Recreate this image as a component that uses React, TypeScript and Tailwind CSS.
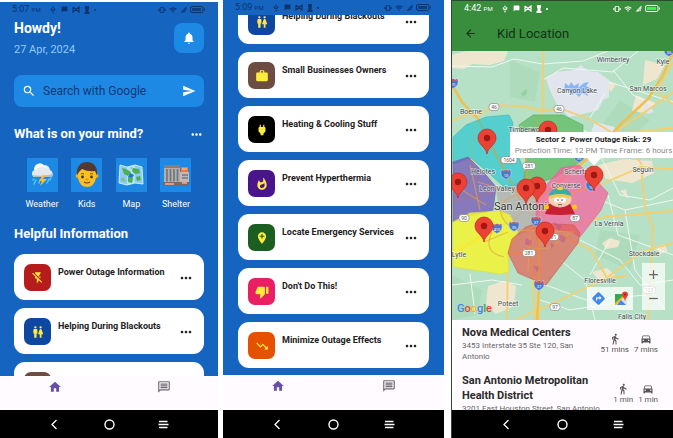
import type { ReactNode } from "react";
import {
  MdAdd,
  MdAddLocation,
  MdArrowBack,
  MdChatBubble,
  MdDirections,
  MdDirectionsCar,
  MdDirectionsWalk,
  MdFlashOff,
  MdHome,
  MdMoreHoriz,
  MdNotifications,
  MdOutlineMessage,
  MdPower,
  MdRemove,
  MdSearch,
  MdSend,
  MdThumbDown,
  MdTrendingDown,
  MdUsb,
  MdVibration,
  MdWc,
  MdWhatshot,
  MdWifi,
  MdSignalCellularNodata,
  MdWork,
} from "react-icons/md";

/* ---------- shared chrome ---------- */

function StatusBar({ time, battery, className }: { time: string; battery: string; className: string }) {
  return (
    <div className={`flex h-[15px] shrink-0 items-center justify-between pl-3 pr-[13px] ${className}`}>
      <div className="flex items-center gap-1">
        <span className="text-[9px] leading-3">
          {time} <span className="text-[6px]">PM</span>
        </span>
        <MdUsb className="ml-1 size-2" />
        <MdChatBubble className="size-[7px]" />
        <svg viewBox="0 0 8 7" className="h-[7px] w-2" fill="none" stroke="currentColor" strokeWidth="1.2">
          <path d="M1 1v5l6-5v5L1 1M7 1v5" />
        </svg>
        <svg viewBox="0 0 6 8" className="h-2 w-[6px]" fill="currentColor">
          <path d="M1 0h4v3H4.500v3h1v2h-5V6h1V3H1z" />
        </svg>
        <span className="size-[2px] rounded-full bg-current" />
      </div>
      <div className="flex items-center gap-[3px]">
        <MdVibration className="size-2" />
        <MdWifi className="size-2" />
        <MdSignalCellularNodata className="size-[7px]" />
        <svg viewBox="0 0 15 7" className="h-[7px] w-[15px]" fill="none" stroke="currentColor">
          <rect x=".5" y=".5" width="12.500" height="6" rx="1.500" />
          <rect x="2" y="2" width="9" height="3" fill={battery} stroke="none" />
          <path d="M14.500 2.500v2" />
        </svg>
      </div>
    </div>
  );
}

function SystemNav() {
  return (
    <div className="flex h-7 shrink-0 items-center justify-between bg-black px-[49px] text-white">
      <button aria-label="Back">
        <svg viewBox="0 0 11 11" className="size-[11px]" fill="none" stroke="currentColor" strokeWidth="1.300">
          <path d="M7.500 1 3 5.500 7.500 10" />
        </svg>
      </button>
      <button aria-label="Home screen">
        <svg viewBox="0 0 11 11" className="size-[11px]" fill="none" stroke="currentColor" strokeWidth="1.400">
          <circle cx="5.500" cy="5.500" r="4.500" />
        </svg>
      </button>
      <button aria-label="Recent apps">
        <svg viewBox="0 0 11 11" className="size-[11px]" fill="none" stroke="currentColor" strokeWidth="1.500">
          <path d="M1 2.500h8.500M.5 5.500h10M1 8.500h8.500" />
        </svg>
      </button>
    </div>
  );
}

function TabBar({ className }: { className: string }) {
  return (
    <nav className={`grid shrink-0 grid-cols-2 bg-[#fffbff] ${className}`}>
      <button aria-label="Home" className="flex justify-center pt-1 text-[#6750a4]">
        <MdHome className="size-[14px]" />
      </button>
      <button aria-label="Messages" className="flex justify-center pt-1 text-[#6f6a74]">
        <MdOutlineMessage className="size-[14px]" />
      </button>
    </nav>
  );
}

function TopicCard({ title, color, icon }: { title: string; color: string; icon: ReactNode }) {
  return (
    <article className="flex h-[46px] shrink-0 items-start rounded-[11px] bg-white px-[10px] pt-[10px] text-[#212121]">
      <span className={`flex size-[27px] shrink-0 items-center justify-center rounded-[7px] text-[#ffeb3b] ${color}`}>
        {icon}
      </span>
      <h3 className="ml-[7px] flex-1 whitespace-nowrap text-[9px] font-bold leading-4">{title}</h3>
      <button aria-label={`More about ${title}`} className="mt-[6px]">
        <MdMoreHoriz className="size-4" />
      </button>
    </article>
  );
}

const cards = {
  power: <TopicCard title="Power Outage Information" color="bg-[#b71c1c]" icon={<MdFlashOff className="size-[14px]" />} />,
  blackout: <TopicCard title="Helping During Blackouts" color="bg-[#0d47a1]" icon={<MdWc className="size-[14px]" />} />,
  business: <TopicCard title="Small Businesses Owners" color="bg-[#6d4c41]" icon={<MdWork className="size-[14px]" />} />,
  heating: <TopicCard title="Heating &amp; Cooling Stuff" color="bg-black" icon={<MdPower className="size-[14px]" />} />,
  heat: <TopicCard title="Prevent Hyperthermia" color="bg-[#4a148c]" icon={<MdWhatshot className="size-[14px]" />} />,
  locate: <TopicCard title="Locate Emergency Services" color="bg-[#1b5e20]" icon={<MdAddLocation className="size-[14px]" />} />,
  dont: <TopicCard title="Don't Do This!" color="bg-[#e91e63]" icon={<MdThumbDown className="size-[14px]" />} />,
  minimize: <TopicCard title="Minimize Outage Effects" color="bg-[#e65100]" icon={<MdTrendingDown className="size-[14px]" />} />,
};

/* ---------- shortcut pictures ---------- */

const WeatherArt = (
  <svg viewBox="0 0 26 26" className="size-[26px]">
    <path d="M7 18l-2 4M11 18l-1 3M20 17l-2 4M22 16l-1 2M5 17l-1 1" stroke="#4fc3f7" strokeWidth="1.600" strokeLinecap="round" />
    <path d="M5 15a4 4 0 0 1 0-7 6 6 0 0 1 10-5 6 6 0 0 1 6 5 4 4 0 0 1 1 7z" fill="#e4e9ec" />
    <path d="M6 8a5 5 0 0 1 9-4 5 5 0 0 1 4 3 9 9 0 0 0-13 1z" fill="#fff" />
    <path d="M3 13q10 2 21-1 0 3-2 3H5z" fill="#b5bec4" />
    <path d="M14 13l-4 6h3l-2 5 7-7h-4l3-4z" fill="#fbc02d" />
  </svg>
);

const KidArt = (
  <svg viewBox="0 0 26 26" className="size-[26px]">
    <circle cx="3.500" cy="14" r="2" fill="#f5a623" />
    <circle cx="22.500" cy="14" r="2" fill="#f5a623" />
    <path d="M4 11a9 9 0 0 1 18 0v5q-2 9-9 9t-9-9z" fill="#fcc021" />
    <path d="M3 13C2 4 7 0 13 0s11 4 10 13l-2-4Q14 10 8 7l-3 3z" fill="#543930" />
    <path d="M7 12q2-1 3 0M16 12q2-1 3 0" stroke="#6d4c41" strokeWidth="1" fill="none" />
    <circle cx="8.500" cy="15" r="1.400" fill="#403530" />
    <circle cx="17.500" cy="15" r="1.400" fill="#403530" />
    <path d="M11.500 17.500h3" stroke="#e18b1c" strokeWidth="1.500" />
    <path d="M10 20q3 2 6 0" stroke="#6d3b24" strokeWidth="1.200" fill="none" />
  </svg>
);

const MapArt = (
  <svg viewBox="0 0 26 26" className="size-[26px]">
    <path d="M2 3l7 2 8-2 7 2 1 17-8-1-8 2-8-2z" fill="#b3e0f5" />
    <path d="M2 3l7 2v18l-8-2zM17 3l7 2 1 17-8-1z" fill="#90caf9" />
    <path d="M4 6l4 1 5 3-3 4-4-2zM15 6l6 1 1 4-5 1-3-3zM10 15l5 1-1 5-4-1zM18 15l4-1 1 4-4 1z" fill="#4caf50" />
    <path d="M3 16l3-1 2 5-5-1zM12 6l2-1 1 3z" fill="#81c784" />
    <path d="M12 11l4 2-2 3-4-1z" fill="#1976d2" />
    <path d="M2 3l7 2 8-2 7 2 1 17-8-1-8 2-8-2z" fill="none" stroke="#e1f5fe" strokeWidth=".800" />
  </svg>
);

const ShelterArt = (
  <svg viewBox="0 0 28 26" className="h-[26px] w-7">
    <path d="M2 3h16v20H2z" fill="#bcaaa4" />
    <path d="M2 3h16v3H2z" fill="#8d7b74" />
    <path d="M5 7v13M8.500 7v13M12 7v13M15.500 7v13" stroke="#5f7a87" strokeWidth="1.600" />
    <path d="M2 20h16" stroke="#d7ccc8" strokeWidth=".700" />
    <path d="M18 10h9v13h-9z" fill="#c9b7ae" />
    <path d="M19 5h7v5h-7z" fill="#ff7043" />
    <path d="M20 7h5" stroke="#ffe082" />
    <path d="M20 13h6M20 16h6" stroke="#607d8b" strokeWidth="1.500" />
    <path d="M1 20h26v4H1z" fill="#7b6a63" />
    <path d="M3 22h9M20 21h5" stroke="#ffab91" strokeWidth="1.500" />
  </svg>
);

const shortcuts = [
  { label: "Weather", art: WeatherArt },
  { label: "Kids", art: KidArt },
  { label: "Map", art: MapArt },
  { label: "Shelter", art: ShelterArt },
];

function HomeScreen() {
  return (
    <section className="flex min-h-0 min-w-0 flex-col border-t-2 border-white bg-[#1565c0]">
      <StatusBar time="5:07" battery="#0c3f80" className="text-[#0a3470]" />
      <main className="flex min-h-0 flex-1 flex-col overflow-hidden px-[14px] text-white">
        <header className="flex shrink-0 items-start justify-between">
          <div>
            <h1 className="mt-[2px] text-[14px] font-bold leading-[18px]">Howdy!</h1>
            <p className="mt-[5px] text-[11px] leading-4 text-[#90caf9]">27 Apr, 2024</p>
          </div>
          <button aria-label="Notifications" className="mt-[6px] flex size-[30px] items-center justify-center rounded-lg bg-[#1e88e5]">
            <MdNotifications className="size-[14px]" />
          </button>
        </header>
        <form className="mt-[17px] flex h-8 shrink-0 items-center rounded-lg bg-[#1e88e5] px-2">
          <label htmlFor="search" className="sr-only">Search</label>
          <MdSearch className="size-[14px] shrink-0" />
          <input
            id="search"
            type="text"
            placeholder="Search with Google"
            className="ml-[7px] h-8 min-w-0 flex-1 bg-transparent text-[12px] leading-5 outline-none placeholder:text-[#0d3a78]"
          />
          <button type="button" aria-label="Send" className="shrink-0">
            <MdSend className="size-[14px]" />
          </button>
        </form>
        <div className="mt-[19px] flex shrink-0 items-center justify-between">
          <h2 className="text-[13px] font-bold leading-4">What is on your mind?</h2>
          <button aria-label="More">
            <MdMoreHoriz className="size-[15px]" />
          </button>
        </div>
        <div className="mt-4 flex shrink-0 justify-between px-3">
          {shortcuts.map((s) => (
            <button key={s.label} className="flex w-8 flex-col items-center">
              <span className="flex h-[34px] w-[31px] items-center justify-center bg-[#1e88e5]">{s.art}</span>
              <span className="mt-1 text-[9px] leading-4">{s.label}</span>
            </button>
          ))}
        </div>
        <h2 className="mt-[14px] shrink-0 text-[13px] font-bold leading-4">Helpful Information</h2>
        <div className="mt-3 flex flex-col gap-2">
          {cards.power}
          {cards.blackout}
          {cards.business}
        </div>
      </main>
      <TabBar className="h-[34px]" />
      <SystemNav />
    </section>
  );
}

function TopicsScreen() {
  return (
    <section className="flex min-h-0 min-w-0 flex-col bg-[#1565c0]">
      <StatusBar time="5:09" battery="#0c3f80" className="text-[#0a3470]" />
      <main className="flex min-h-0 flex-1 flex-col justify-end gap-2 overflow-hidden px-[15px] pb-[7px]">
        {cards.blackout}
        {cards.business}
        {cards.heating}
        {cards.heat}
        {cards.locate}
        {cards.dont}
        {cards.minimize}
      </main>
      <TabBar className="h-[35px]" />
      <SystemNav />
    </section>
  );
}

/* ---------- map ---------- */

const towns: [string, number, number][] = [
  ["Wimberley", 613, 62],
  ["Kyle", 663, 64],
  ["Canyon Lake", 577, 93],
  ["San Marcos", 648, 91],
  ["Boerne", 471, 114],
  ["Timberwood", 528, 132],
  ["Helotes", 483, 174],
  ["Leon Valley", 497, 191],
  ["Converse", 566, 188],
  ["Schertz", 576, 174],
  ["Seguin", 643, 172],
  ["La Vernia", 609, 226],
  ["Stockdale", 644, 256],
  ["Floresville", 600, 283],
  ["Poteet", 508, 306],
  ["Lytle", 459, 257],
  ["Falls City", 632, 319],
];

const pins: [number, number][] = [
  [487, 154],
  [548, 146],
  [458, 198],
  [537, 202],
  [526, 204],
  [594, 191],
  [484, 242],
  [545, 247],
];

const badges: [string, number, number][] = [
  ["46", 494, 107],
  ["46", 559, 109],
  ["1604", 509, 160],
  ["281", 529, 166],
  ["90", 464, 218],
  ["87", 575, 218],
  ["181", 552, 237],
  ["281", 529, 253],
  ["97", 555, 307],
  ["123", 649, 290],
];

const shields: [string, number, number][] = [
  ["10", 453, 83],
  ["35", 669, 51],
  ["10", 506, 174],
  ["35", 579, 157],
  ["10", 591, 186],
  ["410", 497, 228],
  ["35", 514, 226],
  ["37", 536, 221],
  ["37", 539, 285],
];

function RegionMap() {
  return (
    <svg
      viewBox="452 51 221 269"
      preserveAspectRatio="xMidYMid slice"
      className="absolute inset-0 size-full"
      fontFamily="Roboto, sans-serif"
      role="img"
      aria-label="Map of the San Antonio area"
    >
      <path d="M452 51h221v269H452z" fill="#b7e1c6" />
      <g fill="#addbbb">
        <path d="M510 60l30 12-5 30-25-5zM620 100l30 20-25 25-30-10zM600 230l40 5-10 35-35-15zM452 275l30 15-5 25-25 5z" />
      </g>
      <path d="M521 93l6-4v5l-5 3z" fill="#96cfa5" />
      <g fill="#efe6cf">
        <path d="M452 55l14-4h42l-4 10-14 4-18-1-8 5-12-1z" />
        <path d="M602 78l14 6-5 8zM645 60l20 5-8 14-14 6zM636 95l20 8-10 10-14-2zM598 165l26-6 28 2 2 12-22 10-26-4z" />
        <path d="M488 286l16-5 12 5-2 20-18 8-10-10zM602 243l8-5 10 3-2 6-12 2zM592 272l15-4 8 7-14 8zM656 247l8-3 4 7-8 3zM620 191l6-2 2 10z" />
      </g>
      <path d="M549 88l-3-10 10-6 18-2 7-5 7 6 10 1 11 8v17l-6 3-5 10-19 5-10 2-13-14z" fill="#e3e5ee" />
      <path d="M640 100l8 4 6 8-6 2zM595 122l20 5-4 8-20-3z" fill="#e3e5ee" />
      <path d="M565 83l4 3 2-4 3 4 5-3-1 5 6-5 5-1-3 4 6 3-6 1 2 6-6-3-3 4-4-4-3 2-2-5-6 1z" fill="#8ab4f8" />

      <g fill="none" stroke="#eef7ef" strokeWidth="1">
        <path d="M452 66l40 1 22-8 29 5 40-3 25-10M543 80l20-12 50 4 25-21M609 82l64 20M613 70l20 25 20 10M590 118l15-25M583 130l30 14 30-9 30 12M600 200l25 10 48-10M608 195l10 40 55 20M580 240l40 20 20 25 33-5M546 285l40 15 60-5M560 260l25 20 10 40M452 285l40-5 30 5M470 274l5 40M540 300l30 10 50-8M625 210l10 60 30 40M600 155l20 40 30 5 23-12M610 240l-20 35" />
      </g>
      <g fill="none" stroke="#f5cf6e" strokeWidth="1.800">
        <path d="M543 51v50q1 9-3 16l-12 26-2 30 3 30 6 117" />
        <path d="M452 121q14-8 28-6l14-10 26 1 25 5 14-3 30 11 24 14 20-1 40-4" />
        <path d="M673 92l-28 20-33 22M673 62l-10 18-4 14 14 10M612 134l20 15 10 16" />
        <path d="M526 204l35-10 34-7 46-20 32 2M641 167l4 40 8 20-5 93" />
        <path d="M526 230l35 5 30 15 16 28 20-2M673 243l-30 8-38 28-60 28-30 13" />
        <path d="M505 188l-25 8-28 5M500 230l-22 10-26 10M508 250l-1 70M575 225l30-8 68-6M478 118l-8 30 8 34" />
        <path d="M539 230v90M538 253h-30" />
      </g>
      <g fill="none" stroke="#f2be4d" strokeWidth="2.500">
        <path d="M452 85l10 17 17 18 10 22 17 30 14 28" />
        <path d="M673 53l-11 24-14 22-24 22-12 13-16 18-30 24-30 25-26 21-30 14-28 20" />
        <path d="M526 200l9 22 4 25v40l-2 33" />
      </g>

      <path d="M496 187l28-5 14 5 4 39-16 6-8 4-18-20z" fill="#b5b3b1" fillOpacity=".85" />
      <g strokeWidth=".700">
        <path d="M453 137l13-12 20-8 23-2 4 8-2 12 13 37-1 13-18 3-14-13-20-17-18 6z" fill="#25c7d2" fillOpacity=".68" stroke="#45b9bd" />
        <path d="M519 125l14-10h30l20 10v35l-27 17-23 8-9-5 2-20z" fill="#58b85b" fillOpacity=".7" stroke="#5eac62" />
        <path d="M453 162l15-5 18 18 10 12-3 23-27 7-13 5z" fill="#7552b8" fillOpacity=".72" stroke="#7761a7" />
        <path d="M536 197l25-29 18-3 14 12 15 16-7 17-21 27-8-5-32-6-4-11z" fill="#f5639d" fillOpacity=".75" stroke="#dc6a96" />
        <path d="M453 222l17-9 30-2 10 4 8 17-10 21 1 19-9 2-47-7z" fill="#f3f332" fillOpacity=".85" stroke="#d9df4d" />
        <path d="M526 227l12-4 36 2 6 8-2 10-32 42-28-12-10-20 4-14z" fill="#e35b4e" fillOpacity=".68" stroke="#c96157" />
      </g>
      <g fill="none" stroke="#e8a13f" strokeOpacity=".65" strokeWidth="1.200">
        <path d="M489 142l17 30 14 28M526 150l2 40M500 205q25-22 40 0 4 22-18 26-22-4-22-26M519 230l55 2M539 225v60M478 182l26 8M484 242l24-10M520 250l30-2 20-15M530 235l-2 37" />
        <path d="M462 190l24 15M470 165l10 45M492 232q-10 20 12 25M550 200l40-13" />
      </g>
      <path d="M526 238l6 3-2 5-5-2zM560 235l6 2-2 6-5-3zM551 243l4 2-4 4zM533 266l6 1-2 5zM553 222l9 4-3 5z" fill="#b44ea0" fillOpacity=".45" />

      <g fontSize="7" fill="#444d50" stroke="#fff" strokeWidth="1.500" strokeOpacity=".55" paintOrder="stroke" textAnchor="middle">
        {towns.map(([name, x, y]) => (
          <text key={name} x={x} y={y}>{name}</text>
        ))}
      </g>
      <text x="494" y="210" fontSize="11" fill="#333" stroke="#fff" strokeOpacity=".5" strokeWidth="1.500" paintOrder="stroke">
        San Antonio
      </text>

      {badges.map(([n, x, y], i) => (
        <g key={i}>
          <rect x={x - n.length * 1.5 - 2} y={y - 3.5} width={n.length * 3 + 4} height="7" rx="3" fill="#fff" stroke="#777" strokeWidth=".600" />
          <text x={x} y={y + 2} fontSize="5" fill="#555" textAnchor="middle">{n}</text>
        </g>
      ))}
      {shields.map(([n, x, y], i) => (
        <g key={i} transform={`translate(${x} ${y})`}>
          <path d="M-4.500-4.500l2 1 2.500-1 2.500 1 2-1q2.500 7-4.500 10-7-3-4.500-10z" fill="#4a78c8" stroke="#dfe9fb" strokeWidth=".500" />
          <path d="M-4-4l1.500 1 2.500-1 2.500 1 1.500-1v2h-8z" fill="#c65a66" />
          <text y="3" fontSize="4" fill="#fff" textAnchor="middle">{n}</text>
        </g>
      ))}

      {pins.map(([x, y]) => (
        <g key={`${x}-${y}`} transform={`translate(${x} ${y})`}>
          <path d="M0 0C-1-7-9-9-9-16a9 9 0 0 1 18 0C9-9 1-7 0 0z" fill="#ea4335" stroke="#c5221f" strokeWidth=".700" />
          <circle cy="-16" r="3.200" fill="#a01812" />
        </g>
      ))}

      <g>
        <path d="M549 204q11-5 21 0l5 10q-15 2-30 0z" fill="#c81f33" />
        <circle cx="546.500" cy="207" r="2.500" fill="#f6c915" />
        <circle cx="574.500" cy="207" r="2.500" fill="#f6c915" />
        <ellipse cx="560" cy="199" rx="11.500" ry="8.500" fill="#f6cfb0" />
        <path d="M549 196q1-8 11-8t11 8q-11-4-22 0z" fill="#3fa9a4" />
        <path d="M549 197q11-6 22 0l-.5 1.500q-10.500-4-21 0z" fill="#e8cf3a" />
        <ellipse cx="560" cy="188.500" rx="3" ry="1.500" fill="#f5d32c" />
        <ellipse cx="557" cy="200" rx="3" ry="2.600" fill="#fff" />
        <ellipse cx="563" cy="200" rx="3" ry="2.600" fill="#fff" />
        <circle cx="558" cy="200" r=".700" fill="#222" />
        <circle cx="562" cy="200" r=".700" fill="#222" />
        <path d="M558 205q2-1 4 0" stroke="#6b3328" strokeWidth=".800" fill="none" />
      </g>
    </svg>
  );
}

function MapPanel() {
  return (
    <div className="relative min-h-0 flex-1 overflow-hidden">
      <RegionMap />
      <div className="absolute left-[58px] right-0 top-[81px] h-[26px] bg-white pl-1 pt-[2px] text-center">
        <p className="whitespace-nowrap text-[8px] font-bold leading-[11px] text-[#222]">Sector 2&nbsp; Power Outage Risk: 29</p>
        <p className="whitespace-nowrap text-[8px] leading-[11px] text-[#8a8a8a]">Prediction Time: 12 PM Time Frame: 6 hours</p>
        <svg viewBox="0 0 14 8" className="absolute left-[77px] top-[26px] h-2 w-[14px]" fill="#fff">
          <path d="M0 0h14L7 8z" />
        </svg>
      </div>
      <div className="absolute bottom-1 left-[5px] text-[11px] font-medium leading-[14px]">
        <span className="text-[#4285f4]">G</span>
        <span className="text-[#ea4335]">o</span>
        <span className="text-[#fbbc05]">o</span>
        <span className="text-[#4285f4]">g</span>
        <span className="text-[#34a853]">l</span>
        <span className="text-[#ea4335]">e</span>
      </div>
      <div className="absolute bottom-[10px] right-10 flex h-[23px] w-[46px] items-center justify-around bg-white/75">
        <button aria-label="Directions" className="text-[#4285f4]">
          <MdDirections className="size-[15px]" />
        </button>
        <button aria-label="Open in Google Maps">
          <svg viewBox="0 0 15 15" className="size-[15px]">
            <path d="M1 3h12v11H1z" fill="#34a853" />
            <path d="M1 14L13 3v11z" fill="#dfe3e6" />
            <path d="M1 12L11 3h2L2 14H1z" fill="#fbbc05" />
            <path d="M7 9l5 5H3z" fill="#4285f4" />
            <path d="M11 11C11 7 8 6 8 3.500a3 3 0 0 1 6 0C14 6 11 7 11 11z" fill="#ea4335" />
            <circle cx="11" cy="3.500" r="1" fill="#a01812" />
          </svg>
        </button>
      </div>
      <div className="absolute bottom-[10px] right-2 flex h-[47px] w-[23px] flex-col items-center justify-between bg-white/70 py-1 text-[#666]">
        <button aria-label="Zoom in">
          <MdAdd className="size-[15px]" />
        </button>
        <button aria-label="Zoom out">
          <MdRemove className="size-[15px]" />
        </button>
      </div>
    </div>
  );
}

function Travel({ icon, time }: { icon: ReactNode; time: string }) {
  return (
    <div className="flex flex-col items-center text-[#555]">
      {icon}
      <span className="whitespace-nowrap text-[8px] leading-[10px]">{time}</span>
    </div>
  );
}

function Place({ name, address, walk, drive }: { name: string; address: string; walk: string; drive: string }) {
  return (
    <li className="flex items-center gap-2 pr-[15px]">
      <div className="min-w-0 flex-1">
        <h3 className="text-[11px] font-bold leading-[15px] text-[#2a2a2a]">{name}</h3>
        <p className="text-[8px] leading-[11px] text-[#666]">{address}</p>
      </div>
      <div className="flex shrink-0 gap-[5px]">
        <Travel icon={<MdDirectionsWalk className="size-3" />} time={walk} />
        <Travel icon={<MdDirectionsCar className="size-3" />} time={drive} />
      </div>
    </li>
  );
}

function LocationScreen() {
  return (
    <section className="ml-[2px] flex min-h-0 min-w-0 flex-col border-l border-t border-[#2b4a2e] bg-[#fffbff]">
      <header className="shrink-0 bg-[#388e3c]">
        <StatusBar time="4:42" battery="#3df04e" className="text-white" />
        <div className="flex h-[35px] items-center pl-3 text-[#15301a]">
          <button aria-label="Back">
            <MdArrowBack className="size-[13px]" />
          </button>
          <h1 className="ml-5 text-[13px] leading-4">Kid Location</h1>
        </div>
      </header>
      <MapPanel />
      <ul className="flex h-[90px] shrink-0 flex-col gap-[11px] overflow-hidden pl-[10px] pt-[5px]">
        <Place name="Nova Medical Centers" address="3453 Interstate 35 Ste 120, San Antonio" walk="51 mins" drive="7 mins" />
        <Place name="San Antonio Metropolitan Health District" address="3201 East Houston Street, San Antonio" walk="1 min" drive="1 min" />
      </ul>
      <SystemNav />
    </section>
  );
}

export default function App() {
  return (
    <div className="grid h-screen grid-cols-[218fr_221fr_224fr] gap-x-[5px] bg-white font-[Roboto,sans-serif]">
      <HomeScreen />
      <TopicsScreen />
      <LocationScreen />
    </div>
  );
}
